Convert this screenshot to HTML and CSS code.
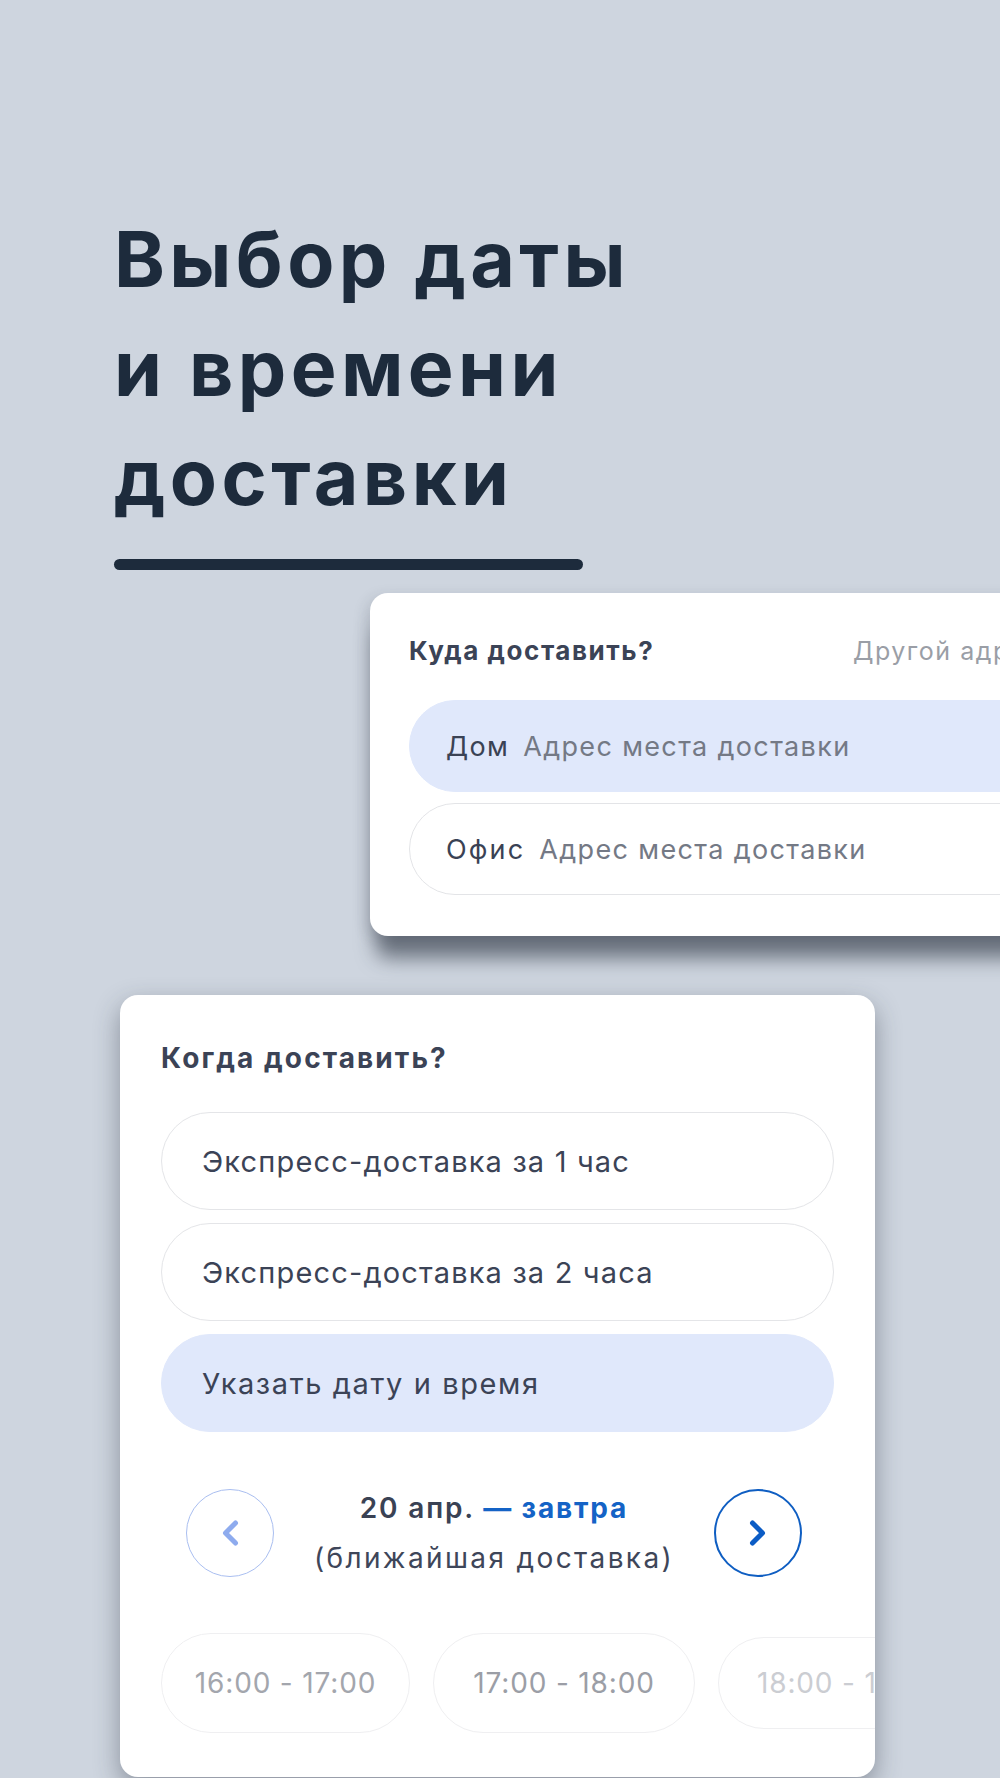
FILE: index.html
```html
<!DOCTYPE html>
<html lang="ru">
<head>
  <meta charset="UTF-8" />
  <meta name="viewport" content="width=device-width, initial-scale=1.0"/>
  <title>Выбор даты и времени доставки</title>
  <link rel="stylesheet" href="styles.css">
</head>
<body>

  <main class="screen">

    <!-- Title -->
    <section class="hero">
      <h1 class="hero-title">Выбор даты<br>и времени<br>доставки</h1>
      <div class="hero-rule"></div>
    </section>

    <!-- Address card -->
    <section class="card card-address">
      <div class="card-head">
        <h2 class="card-title">Куда доставить?</h2>
        <a class="card-link" href="#">Другой адрес</a>
      </div>
      <ul class="addr-list">
        <li class="addr active"><span class="addr-name">Дом</span><span class="addr-text">Адрес места доставки</span></li>
        <li class="addr"><span class="addr-name">Офис</span><span class="addr-text">Адрес места доставки</span></li>
      </ul>
    </section>

    <!-- Time card -->
    <section class="card card-time">
      <h2 class="card-title">Когда доставить?</h2>
      <ul class="option-list">
        <li class="option">Экспресс-доставка за 1 час</li>
        <li class="option">Экспресс-доставка за 2 часа</li>
        <li class="option active">Указать дату и время</li>
      </ul>

      <div class="date-nav">
        <button class="date-btn prev" aria-label="Предыдущий день">
          <svg width="18" height="26" viewBox="0 0 18 26"><path d="M14.5 3 L4.5 13 L14.5 23" /></svg>
        </button>
        <div class="date-text">
          <div class="date-main">20 апр. <span class="date-rel">— завтра</span></div>
          <div class="date-sub">(ближайшая доставка)</div>
        </div>
        <button class="date-btn next" aria-label="Следующий день">
          <svg width="18" height="26" viewBox="0 0 18 26"><path d="M3.5 3 L13.5 13 L3.5 23" /></svg>
        </button>
      </div>

      <div class="slots">
        <div class="slot">16:00 - 17:00</div>
        <div class="slot wide">17:00 - 18:00</div>
        <div class="slot faded">18:00 - 19:00</div>
      </div>
    </section>

  </main>

</body>
</html>
```

FILE: styles.css
```css
/* Reset & Base */
* { margin: 0; padding: 0; box-sizing: border-box; }
body {
  font-family: 'Inter', 'Noto Sans', sans-serif;
  color: #3b4356;
  background-color: #ced5df;
  height: 1778px;
  overflow: hidden;
}
a { text-decoration: none; color: inherit; }
ul { list-style: none; }
button { font: inherit; background: none; cursor: pointer; }

/* Title */
.hero { padding: 205px 0 0 114px; }
.hero-title {
  font-size: 77px;
  line-height: 109px;
  font-weight: 700;
  color: #1d2b3c;
  letter-spacing: 0.057em;
}
.hero-rule {
  margin-top: 27px;
  width: 469px; height: 11px;
  border-radius: 6px;
  background: #1d2b3c;
}

/* Cards */
.card {
  background: #fff;
  border-radius: 18px;
  overflow: hidden;
}
.card-title {
  font-weight: 700;
  color: #3b4356;
}

/* Address card */
.card-address {
  margin: 23px 0 0 370px;
  width: 720px;
  padding: 43px 0 41px 39px;
  box-shadow: 0 28px 20px -6px rgba(40, 48, 62, 0.6), -4px 4px 14px rgba(40, 48, 62, 0.15);
}
.card-head { display: flex; align-items: baseline; }
.card-address .card-title {
  flex: 0 0 444px;
  font-size: 26px;
  line-height: 30px;
  letter-spacing: 0.06em;
}
.card-link { font-size: 25px; letter-spacing: 0.06em; color: #9a9ea6; white-space: nowrap; }

.addr-list { margin-top: 34px; display: flex; flex-direction: column; gap: 11px; }
.addr {
  height: 92px;
  border-radius: 46px;
  border: 1.5px solid #e3e4e7;
  padding-left: 36px;
  display: flex; align-items: center; gap: 14px;
  font-size: 27px;
  letter-spacing: 0.05em;
}
.addr.active { background: #e0e8fb; border-color: #e0e8fb; }
.addr-name { color: #3a4254; }
.addr-text { color: #747985; }
.addr:not(.active) .addr-name { letter-spacing: 0.08em; }

/* Time card */
.card-time {
  margin: 59px 0 0 120px;
  width: 755px;
  padding: 47px 41px 44px;
  box-shadow: 0 10px 26px rgba(40, 48, 62, 0.42);
}
.card-time .card-title { font-size: 28px; line-height: 32px; letter-spacing: 0.075em; }

.option-list { margin-top: 38px; display: flex; flex-direction: column; gap: 13px; }
.option {
  height: 98px;
  border-radius: 49px;
  border: 1.5px solid #e4e5e8;
  padding-left: 40px;
  display: flex; align-items: center;
  font-size: 29px;
  letter-spacing: 0.04em;
  color: #3b4356;
}
.option.active { background: #e0e8fb; border-color: #e0e8fb; letter-spacing: 0.055em; }

/* Date switcher */
.date-nav {
  margin-top: 51px;
  display: flex; align-items: center; justify-content: space-between;
  padding: 0 32px 0 25px;
}
.date-btn {
  width: 88px; height: 88px;
  border-radius: 50%;
  display: flex; align-items: center; justify-content: center;
}
.date-btn path { fill: none; stroke-width: 5; stroke-linecap: round; stroke-linejoin: round; }
.date-btn.prev { border: 1.5px solid #a9bef0; }
.date-btn.prev path { stroke: #8eabee; }
.date-btn.next { border: 2px solid #0f5ec2; }
.date-btn.next path { stroke: #0b5cc5; }

.date-text { text-align: center; font-size: 28px; line-height: 50px; letter-spacing: 0.065em; }
.date-main { font-weight: 600; color: #3a4254; }
.date-rel { font-weight: 700; color: #1463c6; }
.date-sub { color: #3e4659; letter-spacing: 0.085em; }

/* Time slots */
.slots { margin-top: 50px; display: flex; align-items: center; gap: 23px; }
.slot {
  flex: 0 0 249px;
  height: 100px;
  border-radius: 50px;
  border: 1.5px solid #efeff1;
  display: flex; align-items: center; justify-content: center;
  font-size: 28px;
  letter-spacing: 0.03em;
  color: #a3a6ad;
  white-space: nowrap;
}
.slot.wide { flex-basis: 262px; color: #9b9ea6; }
.slot.faded {
  flex-basis: 250px; height: 92px;
  justify-content: flex-start; padding-left: 38px;
  color: #cbcdd2;
}
```
